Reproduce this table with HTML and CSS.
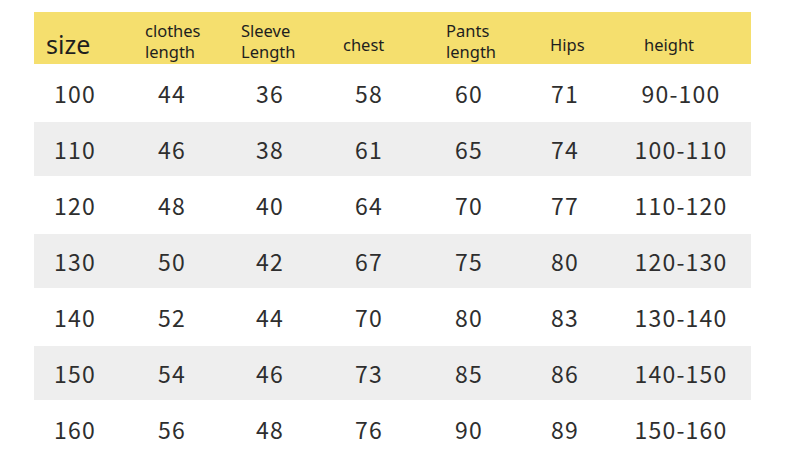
FILE: index.html
```html
<!DOCTYPE html>
<html>
<head>
<meta charset="utf-8">
<link rel="stylesheet" href="styles.css">
</head>
<body>
<div class="chart">
  <div class="head">
    <div class="hc hc-size">size</div>
    <div class="hc hc-clothes">clothes<br>length</div>
    <div class="hc hc-sleeve">Sleeve<br>Length</div>
    <div class="hc hc-chest">chest</div>
    <div class="hc hc-pants">Pants<br>length</div>
    <div class="hc hc-hips">Hips</div>
    <div class="hc hc-height">height</div>
  </div>
  <div class="row"><span>100</span><span>44</span><span>36</span><span>58</span><span>60</span><span>71</span><span class="last">90-100</span></div>
  <div class="row alt"><span>110</span><span>46</span><span>38</span><span>61</span><span>65</span><span>74</span><span class="last">100-110</span></div>
  <div class="row"><span>120</span><span>48</span><span>40</span><span>64</span><span>70</span><span>77</span><span class="last">110-120</span></div>
  <div class="row alt"><span>130</span><span>50</span><span>42</span><span>67</span><span>75</span><span>80</span><span class="last">120-130</span></div>
  <div class="row"><span>140</span><span>52</span><span>44</span><span>70</span><span>80</span><span>83</span><span class="last">130-140</span></div>
  <div class="row alt"><span>150</span><span>54</span><span>46</span><span>73</span><span>85</span><span>86</span><span class="last">140-150</span></div>
  <div class="row"><span>160</span><span>56</span><span>48</span><span>76</span><span>90</span><span>89</span><span class="last">150-160</span></div>
</div>
</body>
</html>
```
FILE: styles.css
```css
html, body {
  margin: 0;
  padding: 0;
  background: #ffffff;
}
body {
  font-family: "Noto Sans", "Noto Sans CJK SC", sans-serif;
  color: #2e2e2e;
}
.chart {
  margin: 12px 0 0 34px;
  width: 717px;
}
.head, .row {
  display: grid;
  grid-template-columns: 82px 112px 84px 114px 86px 106px 133px;
  align-items: center;
}
.head {
  height: 52px;
  background: #f5df6e;
  color: #1e1e1e;
}
.hc {
  font-size: 16.5px;
  line-height: 21px;
  text-align: left;
  padding-top: 12px;
}
.hc-size { padding-left: 12px; font-size: 25px; line-height: 30px; padding-top: 12px; }
.hc-clothes { padding-left: 29px; padding-top: 6px; }
.hc-sleeve { padding-left: 13px; padding-top: 6px; }
.hc-chest { padding-left: 31px; }
.hc-pants { padding-left: 20px; padding-top: 6px; }
.hc-hips { padding-left: 38px; }
.hc-height { padding-left: 26px; }
.row {
  height: 58px;
  font-family: "Noto Sans CJK SC", "Noto Sans", sans-serif;
  font-size: 23px;
  letter-spacing: 1.2px;
  text-align: center;
}
.row.alt {
  height: 54px;
  background: #eeeeee;
}
.row span.last {
  padding-right: 7px;
}
```
